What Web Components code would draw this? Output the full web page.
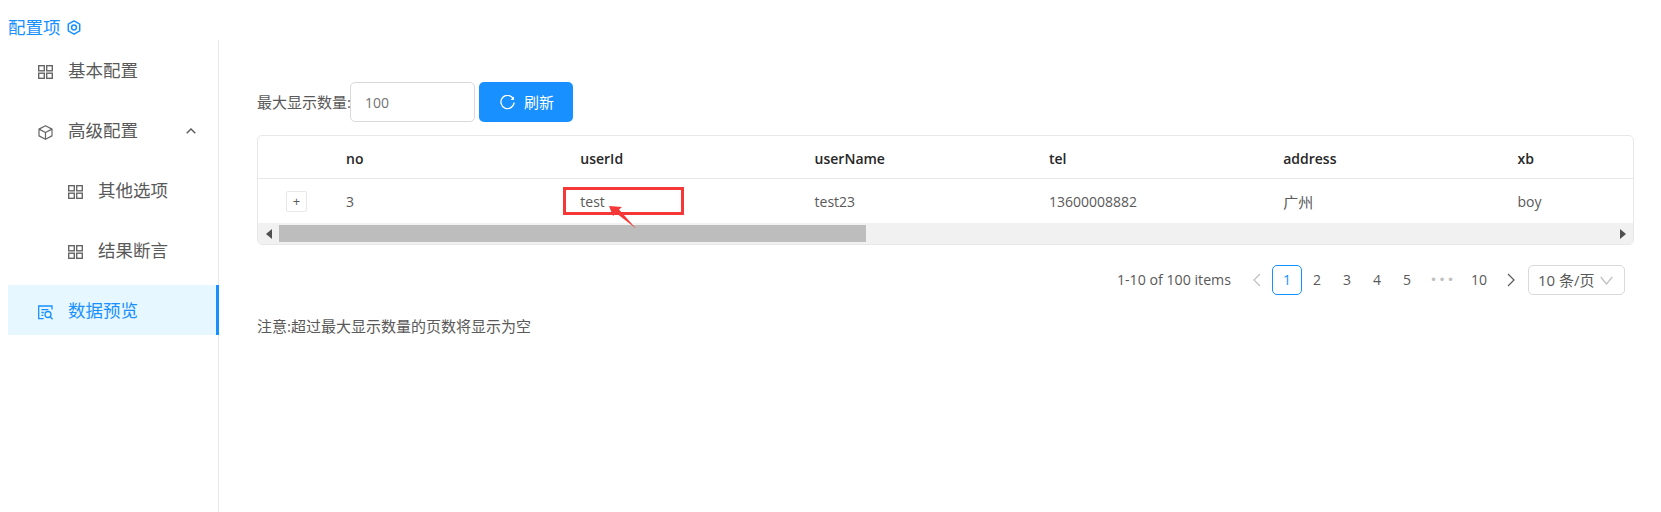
<!DOCTYPE html>
<html lang="zh">
<head>
<meta charset="utf-8">
<title>配置项</title>
<style>
	html, body { margin:0; padding:0; background:#fff; }
	body { font:15px "Open Sans", "Noto Sans CJK SC", sans-serif; color:#595959; height:512px; overflow:hidden; }
</style>
</head>
<body>

<config-page>
	<side-menu slot="side">
		<menu-item icon="grid">基本配置</menu-item>
		<menu-item icon="cube" open>高级配置</menu-item>
		<menu-item icon="grid" sub>其他选项</menu-item>
		<menu-item icon="grid" sub>结果断言</menu-item>
		<menu-item icon="search" active>数据预览</menu-item>
	</side-menu>
	<preview-toolbar></preview-toolbar>
	<data-table></data-table>
	<table-pager></table-pager>
	<p style="margin:21px 0 0;line-height:20px;">注意:超过最大显示数量的页数将显示为空</p>
</config-page>

<script>
const icons = {
	grid: '<svg viewBox="0 0 15 15" width="15" height="15" fill="none" stroke="#666" stroke-width="1.4"><rect x=".7" y=".7" width="5.600" height="5.100"/><rect x="8.700" y=".7" width="5.600" height="5.100"/><rect x=".7" y="8.200" width="5.600" height="5.100"/><rect x="8.700" y="8.200" width="5.600" height="5.100"/></svg>',
	cube: '<svg viewBox="0 0 15 15" width="15" height="15" fill="none" stroke="#666" stroke-width="1.2" stroke-linejoin="round"><path d="M7.500.7l6.500 3.400v6.800l-6.500 3.400L1 10.900V4.100z"/><path d="M1 4.100l6.500 3.400L14 4.100M7.500 7.500v6.800"/></svg>',
	search: '<svg viewBox="0 0 15 15" width="15" height="15" fill="none" stroke="currentColor" stroke-width="1.3"><path d="M14 4.500V1H.7v12.600h5"/><path d="M3.400 4.700h7M3.400 7.500h2.400M3.400 10.300h2"/><circle cx="10" cy="9.500" r="3"/><path d="M12.200 11.700l2.400 2.500"/></svg>'
};

class ConfigPage extends HTMLElement {
	constructor() {
		super();
		this.attachShadow({mode:'open'}).innerHTML = `
		<style>
			:host { display:block; }
			.head { height:40px; padding:12px 0 0 8px; display:flex; align-items:center; gap:6px; box-sizing:border-box; color:#1890ff; font-size:17.5px; }
			.head svg { display:block; margin-top:3px; }
			.body { display:flex; margin-left:8px; height:472px; }
			.side { width:211px; flex:none; box-sizing:border-box; border-right:1px solid #e8e8e8; padding-top:5px; }
			.main { width:1377px; margin-left:38px; padding-top:42px; }
		</style>
		<div class="head">配置项
			<svg viewBox="0 0 14 15" width="14" height="15" fill="none" stroke="currentColor" stroke-width="1.500"><path d="M7 .9l5.700 3.300v6.600L7 14.100l-5.700-3.300V4.200z" stroke-linejoin="round"/><circle cx="7" cy="7.500" r="2.400"/></svg>
		</div>
		<div class="body">
			<div class="side"><slot name="side"></slot></div>
			<div class="main"><slot></slot></div>
		</div>`;
	}
}
customElements.define('config-page', ConfigPage);

class SideMenu extends HTMLElement {
	constructor() {
		super();
		this.attachShadow({mode:'open'}).innerHTML = `
		<style>
			:host { display:flex; flex-direction:column; gap:10px; margin-right:-1px; }
		</style>
		<slot></slot>`;
	}
}
customElements.define('side-menu', SideMenu);

class MenuItem extends HTMLElement {
	constructor() {
		super();
		var icon = icons[this.getAttribute('icon')] || '';
		var chevron = this.hasAttribute('open') ? '<svg class="chev" viewBox="0 0 10 6" width="10" height="6" fill="none" stroke="#595959" stroke-width="1.4"><path d="M.7 5.300L5 1l4.300 4.300"/></svg>' : '';
		this.attachShadow({mode:'open'}).innerHTML = `
		<style>
			:host { display:flex; align-items:center; height:50px; box-sizing:border-box; padding-left:30px; font-size:17.5px; color:#595959; position:relative; }
			:host([sub]) { padding-left:60px; }
			:host([active]) { color:#1890ff; background:#e6f7ff; border-right:3px solid #1890ff; }
			.ic { width:15px; height:15px; margin:5px 15px 0 0; flex:none; display:block; }
			.ic svg { display:block; }
			.tx { margin-bottom:2px; }
			.chev { position:absolute; left:178px; top:23px; }
		</style>
		<span class="ic">${icon}</span><span class="tx"><slot></slot></span>${chevron}`;
	}
}
customElements.define('menu-item', MenuItem);

class PreviewToolbar extends HTMLElement {
	constructor() {
		super();
		this.attachShadow({mode:'open'}).innerHTML = `
		<style>
			:host { display:flex; align-items:center; height:40px; margin-bottom:13px; }
			.lb { width:93px; flex:none; white-space:nowrap; margin-bottom:2px; }
			.num { width:125px; height:40px; box-sizing:border-box; border:1px solid #d9d9d9; border-radius:5px; padding-left:14px; display:flex; align-items:center; font-size:14px; color:#737373; margin-right:4px; }
			button { width:94px; height:40px; border:none; border-radius:5px; background:#1890ff; color:#fff; font:inherit; padding:0 0 0 21px; display:flex; align-items:center; gap:9px; }
			button svg { display:block; }
			button span { margin-bottom:2px; }
		</style>
		<span class="lb">最大显示数量:</span>
		<div class="num">100</div>
		<button><svg viewBox="0 0 15 15" width="15" height="15" fill="none" stroke="currentColor" stroke-width="1.3"><path d="M13.300 3.800A6.600 6.600 0 1 0 14.100 7.500"/><path d="M14.100 1.500l-.2 3.600-3.400-.3z" stroke="none" fill="currentColor"/></svg><span>刷新</span></button>`;
	}
}
customElements.define('preview-toolbar', PreviewToolbar);

class DataTable extends HTMLElement {
	constructor() {
		super();
		var cols = ['no','userId','userName','tel','address','xb'];
		var row = ['3','test','test23','13600008882','<i>广州</i>','boy'];
		this.attachShadow({mode:'open'}).innerHTML = `
		<style>
			:host { display:block; height:110px; box-sizing:border-box; border:1px solid #e8e8e8; border-radius:5px; overflow:hidden; position:relative; font-size:14px; }
			.row { display:grid; grid-template-columns:72px repeat(6, 234.3px); align-items:center; overflow:hidden; }
			.th { height:42px; border-bottom:1px solid #e8e8e8; color:#262626; font-weight:600; }
			.th span { padding-top:2px; }
			.td { height:44px; }
			.td span { padding-top:1px; }
			i { font-style:normal; font-size:15px; }
			.row span { padding-left:16px; white-space:nowrap; }
			.row span:first-child { padding-left:0; }
			.plus { width:21px; height:21px; margin-left:28px; box-sizing:border-box; border:1px solid #e8e8e8; border-radius:2px; display:flex; align-items:center; justify-content:center; font-size:13px; line-height:1; color:#595959; }
			.bar { height:21px; background:#f1f1f1; display:flex; align-items:center; }
			.arrow { width:21px; flex:none; display:flex; justify-content:center; }
			.thumb { width:587px; height:17px; background:#bdbdbd; }
			.gap { flex:1; }
			.mark { position:absolute; left:305px; top:51px; width:121px; height:28px; box-sizing:border-box; border:3px solid #f53737; }
			.pointer { position:absolute; left:349px; top:68px; display:block; }
		</style>
		<div class="row th"><span></span>${cols.map(c=>`<span>${c}</span>`).join('')}</div>
		<div class="row td"><span><div class="plus">+</div></span>${row.map(c=>`<span>${c}</span>`).join('')}</div>
		<div class="bar">
			<div class="arrow"><svg width="6" height="10"><path d="M6 0v10L0 5z" fill="#505050"/></svg></div>
			<div class="thumb"></div>
			<div class="gap"></div>
			<div class="arrow"><svg width="6" height="10"><path d="M0 0v10l6-5z" fill="#505050"/></svg></div>
		</div>
		<div class="mark"></div>
		<svg class="pointer" width="32" height="26" viewBox="0 0 32 26"><path d="M2 2l13 1-3 2.500 17 19-20-15.500-3 3z" fill="#f53737"/></svg>`;
	}
}
customElements.define('data-table', DataTable);

class TablePager extends HTMLElement {
	constructor() {
		super();
		this.attachShadow({mode:'open'}).innerHTML = `
		<style>
			:host { display:flex; align-items:center; justify-content:flex-end; height:30px; margin-top:20px; padding-right:9px; font-size:14px; }
			.total { margin:0 11px 2px 0; font-size:14.200px; }
			.pg { width:30px; height:30px; box-sizing:border-box; display:flex; align-items:center; justify-content:center; padding-bottom:1px; }
			.cur { border:1px solid #1890ff; border-radius:5px; color:#1890ff; }
			.dots { width:40px; color:#bfbfbf; font:13px "Liberation Sans", sans-serif; letter-spacing:4px; padding-left:4px; }
			.ten { width:34px; }
			.nav { width:30px; height:30px; display:flex; align-items:center; justify-content:center; }
			.sel { width:97px; height:30px; margin-left:2px; box-sizing:border-box; border:1px solid #d9d9d9; border-radius:5px; display:flex; align-items:center; justify-content:space-between; padding:0 11px 0 9px; font-size:15px; }
			.sel span { margin-bottom:2px; }
			.sel svg { display:block; }
		</style>
		<span class="total">1-10 of 100 items</span>
		<span class="nav"><svg width="8" height="14" fill="none" stroke="#bfbfbf" stroke-width="1.2"><path d="M7 1L1 7l6 6"/></svg></span>
		<span class="pg cur">1</span>
		<span class="pg">2</span><span class="pg">3</span><span class="pg">4</span><span class="pg">5</span>
		<span class="pg dots">•••</span>
		<span class="pg ten">10</span>
		<span class="nav"><svg width="8" height="14" fill="none" stroke="#595959" stroke-width="1.2"><path d="M1 1l6 6-6 6"/></svg></span>
		<span class="sel"><span>10 条/页</span><svg width="13" height="9" fill="none" stroke="#bfbfbf" stroke-width="1.2"><path d="M.7 1l5.800 7L12.300 1"/></svg></span>`;
	}
}
customElements.define('table-pager', TablePager);
</script>
</body>
</html>
